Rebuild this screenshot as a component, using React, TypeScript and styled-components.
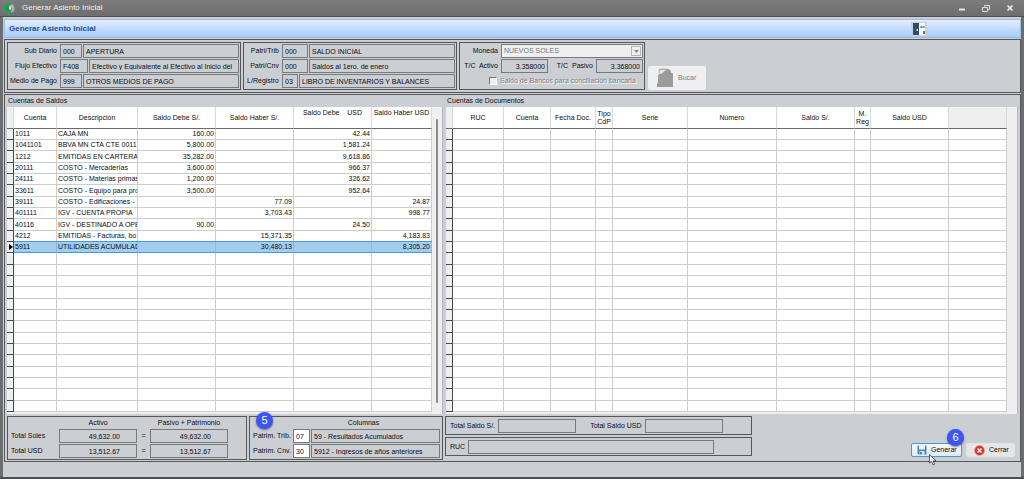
import React from "react";
import styled, { createGlobalStyle, css } from "styled-components";

const c = {
  face: "#cbced3",
  line: "#55575b",
  field: "#77797d",
  text: "#0c0d10",
  grid: "#cdcdcd",
  strip: "#efefef",
};

const Global = createGlobalStyle`
  *, *::before, *::after { box-sizing: border-box; }
  body { margin: 0; background: ${c.face}; }
  body, button, input, select, table {
    font-family: "Liberation Sans", Arial, sans-serif;
    font-size: 7px;
    line-height: 8px;
    color: ${c.text};
  }
  h1, h2 { margin: 0; font-weight: normal; }
`;

/* ---------- window frame ---------- */

const Window = styled.div`
  min-height: 100vh;
  display: flex;
  flex-direction: column;
  background: ${c.face};
  border-bottom: 2px solid #4c4d50;
`;

const TitleBar = styled.header`
  height: 17px;
  display: flex;
  align-items: center;
  padding: 0 8px 0 4px;
  gap: 7px;
  background: linear-gradient(#7c7c7c, #6e6e6e);
  border-bottom: 1px solid #4f4f4f;
`;

const WindowTitle = styled.span`
  flex: 1;
  font-size: 8px;
  line-height: 10px;
  color: #f0f0f0;
`;

const WindowButtons = styled.div`
  display: flex;
  gap: 12px;
`;

const WindowButton = styled.button`
  width: 12px;
  height: 12px;
  padding: 0;
  border: 0;
  background: none;
  display: grid;
  place-items: center;
`;

const Body = styled.main`
  flex: 1;
  display: flex;
  flex-direction: column;
  gap: 1px;
  padding: 2px 0 14px 1px;
  border-left: 3px solid #6c6d6f;
  border-right: 3px solid #6c6d6f;
`;

const Banner = styled.div`
  height: 19px;
  display: flex;
  align-items: center;
  justify-content: space-between;
  padding: 0 93px 0 4px;
  border: 1px solid #9dbce6;
  background: linear-gradient(#e3eeff, #c4dcff 50%, #a9cbfa);
`;

const BannerTitle = styled.h1`
  font-size: 8px;
  line-height: 10px;
  font-weight: bold;
  color: #1a4f94;
`;

const ExitButton = styled.button`
  width: 16px;
  height: 14px;
  padding: 0;
  border: 0;
  background: #cdd0d6;
  display: grid;
  place-items: center;
`;

const Panel = styled.section<{ $row?: boolean }>`
  display: flex;
  flex-direction: ${(p) => (p.$row ? "row" : "column")};
  border: 1px solid ${c.line};
  padding: ${(p) => (p.$row ? "2px" : "0 2px 1px")};
  gap: ${(p) => (p.$row ? "2px" : "0")};
`;

/* ---------- form groups ---------- */

const Group = styled.div<{ $w: number }>`
  width: ${(p) => p.$w}px;
  display: flex;
  flex-direction: column;
  gap: 1px;
  padding: 1px;
  border: 1px solid ${c.line};
`;

const Row = styled.div`
  height: 14px;
  display: flex;
  align-items: center;
  gap: 1px;
`;

const Label = styled.label<{ $w?: number; $left?: boolean }>`
  flex: none;
  width: ${(p) => (p.$w ? `${p.$w}px` : "auto")};
  margin-right: 2px;
  text-align: ${(p) => (p.$left ? "left" : "right")};
  white-space: pre;
`;

const Field = styled.input<{ $w?: number; $num?: boolean; $white?: boolean; $inset?: number }>`
  ${(p) => (p.$w ? css`flex: none; width: ${p.$w}px;` : css`flex: 1; min-width: 0;`)}
  height: 14px;
  margin: 0;
  padding: 0 ${(p) => p.$inset ?? 2}px 0 2px;
  border: 1px solid ${c.field};
  border-radius: 0;
  outline: none;
  background: ${(p) => (p.$white ? "#fff" : "transparent")};
  text-align: ${(p) => (p.$num ? "right" : "left")};
`;

const SelectBox = styled.div`
  flex: 1;
  height: 14px;
  display: grid;
  grid-template-columns: 1fr 12px;
  border: 1px solid ${c.field};
  background: #efefef;
`;

const Select = styled.select`
  grid-area: 1 / 1 / 2 / 3;
  appearance: none;
  padding: 0 2px;
  border: 0;
  border-radius: 0;
  background: none;
  color: #777;
  opacity: 1;
`;

const SelectArrow = styled.span`
  grid-area: 1 / 2 / 2 / 3;
  margin: 1px;
  display: grid;
  place-items: center;
  border: 1px solid #b4b4b4;
  pointer-events: none;
`;

const CheckLabel = styled.label`
  display: flex;
  align-items: center;
  gap: 3px;
  padding-left: 28px;
  color: #7c7d80;
  text-shadow: 1px 1px 0 #fff;
  white-space: nowrap;
`;

const Check = styled.input`
  appearance: none;
  width: 8px;
  height: 8px;
  margin: 0;
  background: #efefef;
  border: 1px solid #fff;
  border-top-color: #77797d;
  border-left-color: #77797d;
`;

const SearchButton = styled.button`
  align-self: flex-end;
  width: 58px;
  height: 24px;
  margin-left: 1px;
  display: flex;
  align-items: center;
  gap: 4px;
  padding: 0 0 0 8px;
  border: 0;
  border-radius: 2px;
  background: #efeff1;
  color: #7d7d7d;
`;

/* ---------- grids ---------- */

const Split = styled.div`
  display: flex;
  gap: 3px;
`;

const Side = styled.div<{ $w?: number }>`
  ${(p) => (p.$w ? css`flex: none; width: ${p.$w}px;` : css`flex: 1; min-width: 0;`)}
`;

const Caption = styled.h2`
  font-size: 7px;
  line-height: 12px;
  padding-left: 1px;
`;

const GridFrame = styled.div`
  display: flex;
  background: ${c.strip};
  padding-bottom: 2px;
  border-right: 1px solid #b3b6bb;
`;

const Track = styled.div`
  flex: none;
  width: 10px;
  display: flex;
  justify-content: center;
  padding: 12px 0 9px;
`;

const Thumb = styled.div`
  width: 2px;
  border-radius: 1px;
  background: #8b8b8b;
`;

const Table = styled.table`
  flex: 1;
  width: 0;
  table-layout: fixed;
  border-collapse: separate;
  border-spacing: 0;
  background: #fff;
`;

const HeadCell = styled.th<{ $top?: boolean; $blank?: boolean }>`
  height: 22px;
  padding: ${(p) => (p.$top ? "2px 0 0" : "0")};
  vertical-align: ${(p) => (p.$top ? "top" : "middle")};
  font-weight: normal;
  white-space: pre;
  background: ${(p) => (p.$blank ? c.strip : "#fff")};
  border-right: 1px solid #dadada;
  border-bottom: 1px solid #6b6b6b;
`;

const Marker = styled.td`
  padding: 0;
  background: ${c.strip};
  border-right: 1px solid #4a4a4a;
  border-bottom: 1px solid #4a4a4a;
  svg { display: block; margin-left: auto; }
`;

const Cell = styled.td<{ $num?: boolean }>`
  padding: 0 1px;
  overflow: hidden;
  white-space: nowrap;
  text-align: ${(p) => (p.$num ? "right" : "left")};
  border-right: 1px solid ${c.grid};
  border-bottom: 1px solid ${c.grid};
`;

const BodyRow = styled.tr<{ $selected?: boolean }>`
  height: 11px;
  &:nth-child(3n) { height: 12px; }
  ${(p) =>
    p.$selected &&
    css`
      ${Cell} {
        background: #a3cdef;
        border-bottom-color: #4599e0;
        border-right-color: #8fbadd;
        box-shadow: 0 -1px 0 #4599e0;
      }
    `}
`;

/* ---------- footer ---------- */

const Footer = styled.div`
  display: flex;
  gap: 2px;
  padding-top: 2px;
`;

const FootGroup = styled(Group)`
  position: relative;
  padding: 1px 2px 1px 3px;
`;

const FootHead = styled.div<{ $cols: string }>`
  height: 10px;
  display: grid;
  grid-template-columns: ${(p) => p.$cols};
  text-align: center;
  line-height: 10px;
`;

const Equals = styled.span`
  width: 11px;
  text-align: center;
`;

const Stack = styled.div`
  display: flex;
  flex-direction: column;
  gap: 2px;
`;

const LineGroup = styled(Group)`
  padding: 2px 4px 1px;
`;

const Gap = styled.span`
  width: 12px;
`;

const Actions = styled.div`
  flex: 1;
  display: flex;
  justify-content: flex-end;
  align-items: flex-end;
  gap: 4px;
  padding: 0 3px 3px 0;
`;

const ActionWrap = styled.div`
  position: relative;
`;

const Action = styled.button<{ $active?: boolean }>`
  width: ${(p) => (p.$active ? 51 : 49)}px;
  height: 14px;
  display: flex;
  align-items: center;
  gap: 4px;
  padding: 0 0 0 ${(p) => (p.$active ? 5 : 7)}px;
  border: 1px solid ${(p) => (p.$active ? "#4c97d6" : "#e3e4e6")};
  border-radius: 2px;
  background: ${(p) => (p.$active ? "linear-gradient(#f4f9fd, #dcebf7)" : "#e6e6e8")};
  svg { flex: none; }
`;

const Badge = styled.span<{ $x: number; $y: number }>`
  position: absolute;
  left: ${(p) => p.$x}px;
  top: ${(p) => p.$y}px;
  width: 17px;
  height: 17px;
  border-radius: 50%;
  background: #3d55f5;
  color: #fff;
  font-size: 11px;
  line-height: 17px;
  text-align: center;
  box-shadow: 0 1px 2px rgba(0, 0, 0, 0.5);
`;

const Pointer = styled.svg`
  position: absolute;
  left: 18px;
  top: 11px;
`;

/* ---------- data ---------- */

type Col = { name: string; w?: number; top?: boolean; num?: boolean; blank?: boolean };

const balanceCols: Col[] = [
  { name: "Cuenta", w: 43 },
  { name: "Descripción", w: 81 },
  { name: "Saldo Debe S/.", w: 78, num: true },
  { name: "Saldo Haber S/.", w: 78, num: true },
  { name: "Saldo Debe    USD", w: 78, num: true, top: true },
  { name: "Saldo Haber USD", num: true, top: true },
];

const documentCols: Col[] = [
  { name: "RUC", w: 51 },
  { name: "Cuenta", w: 47 },
  { name: "Fecha Doc.", w: 45 },
  { name: "Tipo\nCdP", w: 17 },
  { name: "Serie", w: 75 },
  { name: "Número", w: 89 },
  { name: "Saldo S/.", w: 78 },
  { name: "M.\nReg", w: 16 },
  { name: "Saldo USD", w: 78 },
  { name: "", blank: true },
];

const balances: string[][] = [
  ["1011", "CAJA MN", "160.00", "", "42.44", ""],
  ["1041101", "BBVA MN CTA CTE 0011", "5,800.00", "", "1,581.24", ""],
  ["1212", "EMITIDAS EN CARTERA -", "35,282.00", "", "9,618.86", ""],
  ["20111", "COSTO - Mercaderías", "3,600.00", "", "966.37", ""],
  ["24111", "COSTO - Materias primas", "1,200.00", "", "326.62", ""],
  ["33611", "COSTO - Equipo para pro", "3,500.00", "", "952.64", ""],
  ["39111", "COSTO - Edificaciones -", "", "77.09", "", "24.87"],
  ["401111", "IGV - CUENTA PROPIA", "", "3,703.43", "", "998.77"],
  ["40116", "IGV - DESTINADO A OPE", "90.00", "", "24.50", ""],
  ["4212", "EMITIDAS - Facturas, bo", "", "15,371.35", "", "4,183.83"],
  ["5911", "UTILIDADES ACUMULAD", "", "30,480.13", "", "8,305.20"],
];

const VISIBLE_ROWS = 25;

function DataGrid({ cols, rows, selected }: { cols: Col[]; rows: string[][]; selected?: number }) {
  return (
    <Table>
      <colgroup>
        <col width={7} />
        {cols.map((col, i) => (
          <col key={i} width={col.w} />
        ))}
      </colgroup>
      <thead>
        <tr>
          <HeadCell $blank />
          {cols.map((col, i) => (
            <HeadCell key={i} $top={col.top} $blank={col.blank}>
              {col.name}
            </HeadCell>
          ))}
        </tr>
      </thead>
      <tbody>
        {Array.from({ length: VISIBLE_ROWS }, (_, r) => (
          <BodyRow key={r} $selected={r === selected}>
            <Marker>
              {r === selected && (
                <svg width="4" height="6" viewBox="0 0 4 6">
                  <path d="M0 0 4 3 0 6Z" fill="#000" />
                </svg>
              )}
            </Marker>
            {cols.map((col, i) => (
              <Cell key={i} $num={col.num}>
                {rows[r]?.[i] ?? ""}
              </Cell>
            ))}
          </BodyRow>
        ))}
      </tbody>
    </Table>
  );
}

function CodeRow(p: { id: string; label: string; lw: number; code: string; cw: number; text: string }) {
  return (
    <Row>
      <Label htmlFor={p.id} $w={p.lw}>{p.label}</Label>
      <Field id={p.id} $w={p.cw} defaultValue={p.code} />
      <Field aria-label={`${p.label} descripción`} readOnly value={p.text} />
    </Row>
  );
}

function TotalRow({ id, label, value }: { id: string; label: string; value: string }) {
  return (
    <Row>
      <Label htmlFor={id} $w={45} $left>{label}</Label>
      <Field id={id} $w={78} $num $inset={16} readOnly value={value} />
      <Equals>=</Equals>
      <Field aria-label={`${label} Pasivo + Patrimonio`} $w={78} $num $inset={16} readOnly value={value} />
    </Row>
  );
}

export default function App() {
  return (
    <>
      <Global />
      <Window>
        <TitleBar>
          <svg width="11" height="11" viewBox="0 0 11 11">
            <circle cx="5.5" cy="5.5" r="3.8" fill="#5f6a66" stroke="#a9b5ae" strokeWidth="2.4" />
            <path d="M7 1.4A4.2 4.2 0 1 0 7.5 9.2" fill="none" stroke="#12a84a" strokeWidth="2.8" />
            <path d="M5 3.5 7.5 3 7 7 5 6.5Z" fill="#dfe6e2" />
          </svg>
          <WindowTitle>Generar Asiento Inicial</WindowTitle>
          <WindowButtons>
            <WindowButton aria-label="Minimizar">
              <svg width="8" height="8" viewBox="0 0 8 8"><path d="M1 5.5H7" stroke="#e6e6e6" strokeWidth="2" /></svg>
            </WindowButton>
            <WindowButton aria-label="Restaurar">
              <svg width="8" height="8" viewBox="0 0 8 8" fill="none" stroke="#dcdcdc">
                <path d="M2.5 2.5V1.5H7.5V5.5H6M2.5 1.5H7.5" />
                <path d="M.5 3.5H5.5V7.5H.5Z" />
              </svg>
            </WindowButton>
            <WindowButton aria-label="Cerrar ventana">
              <svg width="8" height="8" viewBox="0 0 8 8"><path d="M1.5 1.5 6.5 6.5M6.5 1.5 1.5 6.5" stroke="#ececec" strokeWidth="1.7" /></svg>
            </WindowButton>
          </WindowButtons>
        </TitleBar>

        <Body>
          <Banner>
            <BannerTitle>Generar Asiento Inicial</BannerTitle>
            <ExitButton aria-label="Salir">
              <svg width="14" height="12" viewBox="0 0 14 12">
                <rect x="1" y="0" width="6" height="12" fill="#2c4d6e" />
                <rect x="4.5" y="6" width="1.5" height="2" fill="#dfe8f0" />
                <rect x="7" y="0" width="6" height="12" fill="#fff" />
                <path d="M8.5 4H13" stroke="#4b9cc4" strokeWidth="1.6" />
                <path d="M10 2.5 8 4 10 5.5Z" fill="#4b9cc4" />
                <rect x="11" y="8" width="2" height="3" fill="#6a7078" />
              </svg>
            </ExitButton>
          </Banner>

          <Panel $row>
            <Group $w={234}>
              <CodeRow id="sub" label="Sub Diario" lw={48} code="000" cw={22} text="APERTURA" />
              <CodeRow id="flujo" label="Flujo Efectivo" lw={48} code="F408" cw={28} text="Efectivo y Equivalente al Efectivo al Inicio del" />
              <CodeRow id="medio" label="Medio de Pago" lw={48} code="999" cw={22} text="OTROS MEDIOS DE PAGO" />
            </Group>
            <Group $w={214}>
              <CodeRow id="ptrib" label="Patri/Trib" lw={34} code="000" cw={26} text="SALDO INICIAL" />
              <CodeRow id="pcnv" label="Patri/Cnv" lw={34} code="000" cw={26} text="Saldos al 1ero. de enero" />
              <CodeRow id="lreg" label="L/Registro" lw={34} code="03" cw={16} text="LIBRO DE INVENTARIOS Y BALANCES" />
            </Group>
            <Group $w={186}>
              <Row>
                <Label htmlFor="moneda" $w={37}>Moneda</Label>
                <SelectBox>
                  <Select id="moneda" disabled defaultValue="pen">
                    <option value="pen">NUEVOS SOLES</option>
                  </Select>
                  <SelectArrow>
                    <svg width="5" height="3" viewBox="0 0 5 3"><path d="M0 0H5L2.5 3Z" fill="#8a8a8a" /></svg>
                  </SelectArrow>
                </SelectBox>
              </Row>
              <Row>
                <Label htmlFor="tca" $w={37}>T/C  Activo</Label>
                <Field id="tca" $w={47} $num defaultValue="3.358000" />
                <Label htmlFor="tcp" $w={44}>T/C  Pasivo</Label>
                <Field id="tcp" $num defaultValue="3.368000" />
              </Row>
              <Row>
                <CheckLabel>
                  <Check type="checkbox" disabled />
                  Saldo de Bancos para conciliación bancaria
                </CheckLabel>
              </Row>
            </Group>
            <SearchButton disabled>
              <svg width="18" height="20" viewBox="0 0 18 20">
                <path d="M3 1H13L15 3V5H17V19H1V16L2 14V8L3 6Z" fill="#9c9c9c" />
                <path d="M3 6V1H12" fill="none" stroke="#b9b9b9" />
                <path d="M4 2H10L5 6H3Z" fill="#e4e4e4" />
              </svg>
              Bucar
            </SearchButton>
          </Panel>

          <Panel>
            <Split>
              <Side $w={436}>
                <Caption>Cuentas de Saldos</Caption>
                <GridFrame>
                  <DataGrid cols={balanceCols} rows={balances} selected={10} />
                  <Track><Thumb /></Track>
                </GridFrame>
              </Side>
              <Side>
                <Caption>Cuentas de Documentos</Caption>
                <GridFrame>
                  <DataGrid cols={documentCols} rows={[]} />
                  <Track />
                </GridFrame>
              </Side>
            </Split>

            <Footer>
              <FootGroup $w={240}>
                <FootHead $cols="48px 78px 13px 78px">
                  <span />
                  <span>Activo</span>
                  <span />
                  <span>Pasivo + Patrimonio</span>
                </FootHead>
                <TotalRow id="ts" label="Total Soles" value="49,632.00" />
                <TotalRow id="tu" label="Total USD" value="13,512.67" />
              </FootGroup>
              <FootGroup $w={194}>
                <FootHead $cols="34px 1fr">
                  <span />
                  <span>Columnas</span>
                </FootHead>
                <Row>
                  <Label htmlFor="ctrib" $w={37}>Patrim. Trib.</Label>
                  <Field id="ctrib" $w={17} $white defaultValue="07" />
                  <Field aria-label="Columna Trib." readOnly value="59 - Resultados Acumulados" />
                </Row>
                <Row>
                  <Label htmlFor="ccnv" $w={37}>Patrim. Cnv.</Label>
                  <Field id="ccnv" $w={17} $white defaultValue="30" />
                  <Field aria-label="Columna Cnv." readOnly value="5912 - Ingresos de años anteriores" />
                </Row>
                <Badge $x={6} $y={-5}>5</Badge>
              </FootGroup>
              <Stack>
                <LineGroup $w={307}>
                  <Row>
                    <Label htmlFor="tss">Total Saldo S/.</Label>
                    <Field id="tss" $w={78} readOnly />
                    <Gap />
                    <Label htmlFor="tsu">Total Saldo USD</Label>
                    <Field id="tsu" $w={78} readOnly />
                  </Row>
                </LineGroup>
                <LineGroup $w={307}>
                  <Row>
                    <Label htmlFor="ruc">RUC</Label>
                    <Field id="ruc" $w={246} readOnly />
                  </Row>
                </LineGroup>
              </Stack>
              <Actions>
                <ActionWrap>
                  <Action $active>
                    <svg width="10" height="10" viewBox="0 0 10 10">
                      <path d="M.5 .5H9.5V9.5H1.5L.5 8.5Z" fill="#4a86b8" />
                      <rect x="2" y="0" width="6" height="4.5" fill="#e8f2fa" />
                      <rect x="2.5" y="6" width="5" height="4" fill="#cfe0ee" />
                      <rect x="3.2" y="7" width="1.4" height="2.4" fill="#2f5f8a" />
                    </svg>
                    Generar
                  </Action>
                  <Badge $x={36} $y={-14}>6</Badge>
                  <Pointer width="8" height="12" viewBox="0 0 8 12">
                    <path d="M.5 .5V9L2.6 7.2 4 10.8 5.6 10.1 4.2 6.8H7Z" fill="#fff" stroke="#333" strokeWidth=".8" />
                  </Pointer>
                </ActionWrap>
                <Action>
                  <svg width="11" height="11" viewBox="0 0 11 11">
                    <circle cx="5.5" cy="5.5" r="5" fill="#dc2f2f" stroke="#f0a0a0" strokeWidth=".8" />
                    <path d="M3.5 3.5 7.5 7.5M7.5 3.5 3.5 7.5" stroke="#fff" strokeWidth="1.5" />
                  </svg>
                  Cerrar
                </Action>
              </Actions>
            </Footer>
          </Panel>
        </Body>
      </Window>
    </>
  );
}
